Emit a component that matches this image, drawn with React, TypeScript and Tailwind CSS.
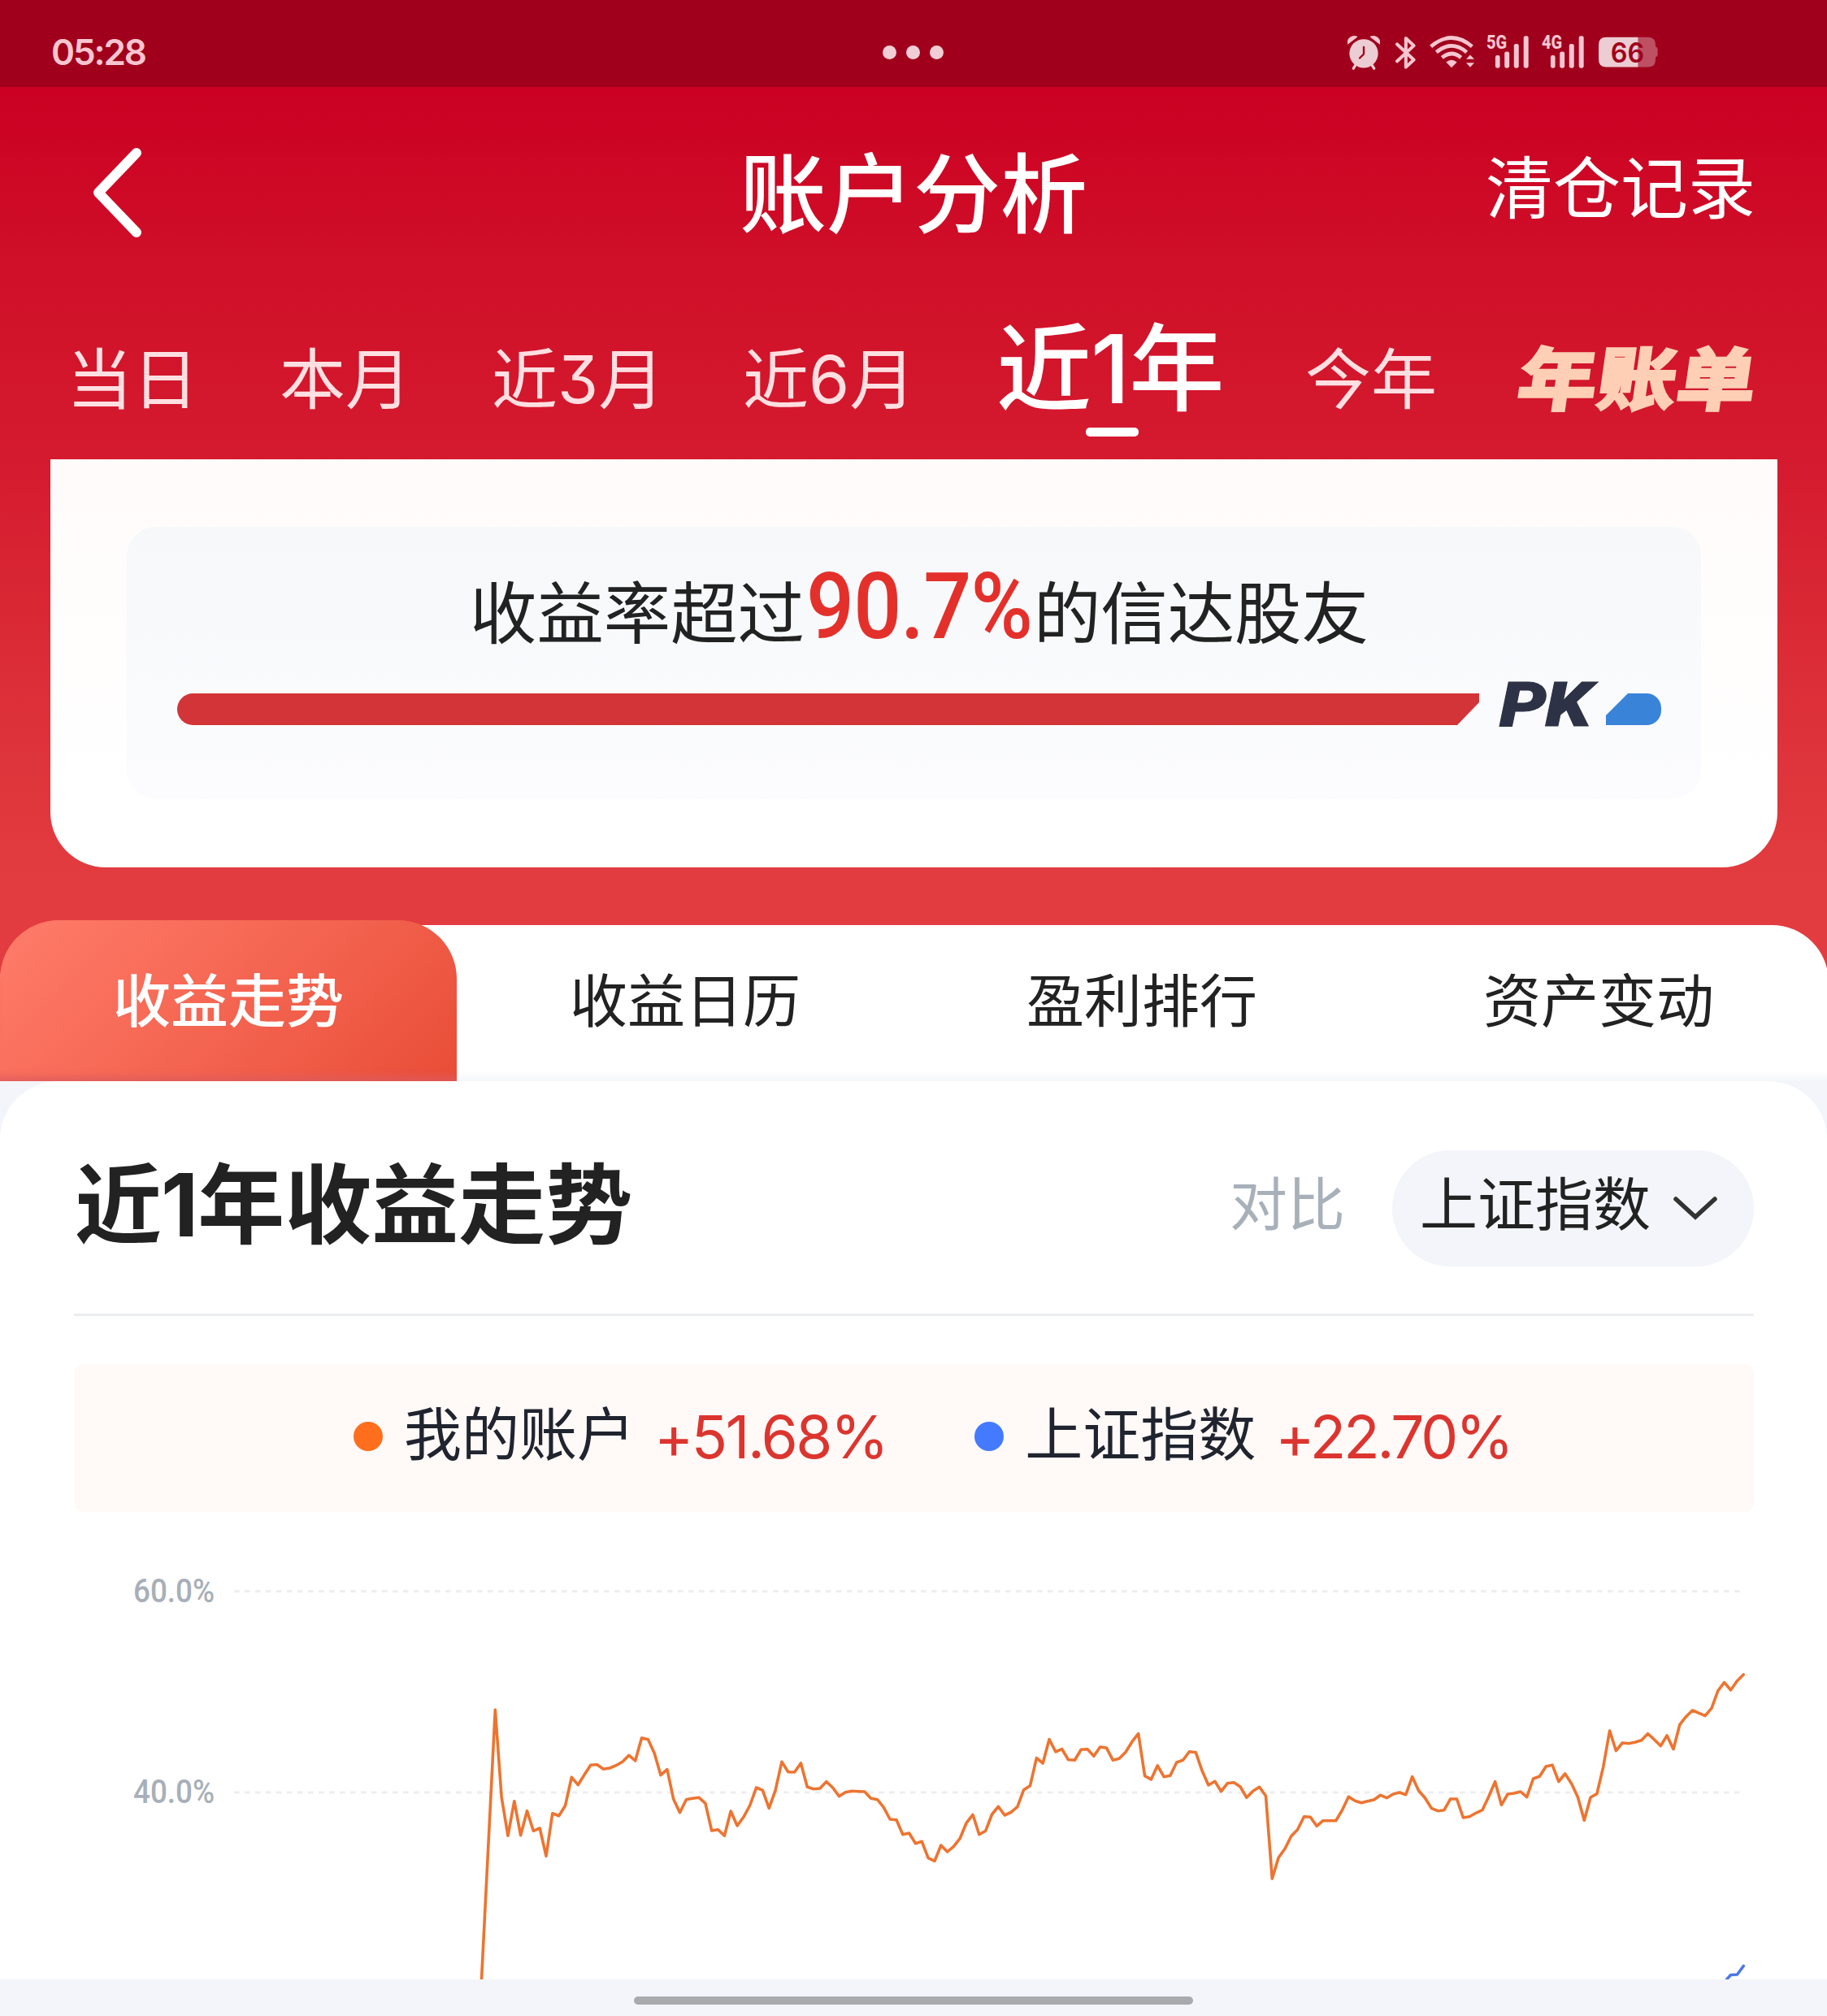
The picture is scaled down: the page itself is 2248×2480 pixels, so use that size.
import type { ReactNode } from 'react';

// Account line, one value per trading day, in thirds of a pixel below the chart's top edge.
const account = [
  190, 512, 655, 527, 653, 563, 637, 627, 730, 572, 581, 544, 439, 467, 430, 394, 392, 409, 405, 395,
  382, 358, 378, 294, 299, 350, 431, 410, 520, 569, 521, 517, 514, 535, 636, 632, 655, 564, 618, 586,
  543, 477, 487, 553, 487, 382, 419, 420, 387, 475, 482, 480, 455, 477, 509, 494, 490, 491, 492, 517,
  521, 550, 594, 596, 650, 645, 683, 676, 737, 748, 690, 714, 694, 664, 607, 577, 650, 637, 576, 547,
  579, 568, 548, 485, 470, 368, 387, 299, 345, 335, 374, 376, 337, 335, 361, 327, 331, 376, 370, 346,
  308, 278, 434, 447, 396, 437, 433, 384, 376, 344, 347, 415, 468, 454, 491, 461, 458, 474, 514, 490,
  475, 508, 813, 736, 703, 656, 632, 584, 586, 619, 599, 599, 599, 560, 511, 526, 533, 527, 522, 505,
  515, 501, 495, 503, 437, 488, 515, 553, 563, 560, 519, 519, 588, 584, 571, 560, 511, 455, 541, 501,
  498, 492, 512, 444, 436, 399, 394, 455, 426, 462, 512, 598, 513, 500, 400, 267, 341, 312, 314, 310,
  302, 278, 300, 323, 285, 335, 245, 215, 192, 202, 212, 184, 120, 89, 117, 84, 60,
];

const accountPoints = account.map((v, i) => `${(609.3 + i * 7.836).toFixed(1)},${(140 + v / 3).toFixed(1)}`).join(' ');

const sections = ['收益走势', '收益日历', '盈利排行', '资产变动'];

function Signal({ label }: { label: string }) {
  return (
    <svg viewBox="633 112 154 146" className="-mt-[6px] h-[49px] w-[51px] overflow-visible" fill="#f7c5d0">
      <text x="630" y="182" fontSize="71" fontWeight="800" fontFamily="Roboto, sans-serif" textLength="76" lengthAdjust="spacingAndGlyphs">
        {label}
      </text>
      <rect x="663" y="205" width="17" height="47" rx="7" />
      <rect x="697" y="191" width="18" height="61" rx="7" />
      <rect x="732" y="162" width="18" height="90" rx="7" />
      <rect x="768" y="133" width="18" height="119" rx="7" />
    </svg>
  );
}

function StatusBar() {
  return (
    <div className="relative flex h-[107px] shrink-0 justify-between bg-[#a0001b] pl-[63px]">
      <span className="mt-[42px] text-[44px] leading-none font-semibold tracking-[-2.1px] text-[#f7c5d0]">05:28</span>
      <div className="absolute top-[56px] left-[1086px] flex gap-[12px]">
        <i className="size-[17px] rounded-full bg-[#f1ced5]" />
        <i className="size-[17px] rounded-full bg-[#f1ced5]" />
        <i className="size-[17px] rounded-full bg-[#f1ced5]" />
      </div>
      <div className="mt-[43px] mr-[208px] flex items-start">
        <svg viewBox="118 130 120 128" className="h-[43px] w-[40px]">
          <circle cx="178" cy="198" r="53" fill="#eccdd3" />
          <path d="M148 240l-8 13M208 240l8 13" stroke="#eccdd3" strokeWidth="10" strokeLinecap="round" />
          <path d="M119 163c-4-20 14-34 35-27zM237 163c4-20-14-34-35-27z" fill="#f7c5d0" stroke="#f7c5d0" strokeWidth="3" strokeLinejoin="round" />
          <path d="M178 174v26l-15 15" fill="none" stroke="#a0001b" strokeWidth="7" strokeLinecap="round" strokeLinejoin="round" />
        </svg>
        <svg viewBox="293 130 74 128" className="ml-[19px] h-[43px] w-[25px]">
          <path d="M299 164l61 57-29 27V142l29 27-61 57" fill="none" stroke="#f7c5d0" strokeWidth="12" strokeLinecap="round" strokeLinejoin="round" />
        </svg>
        <svg viewBox="420 130 168 128" className="ml-[17px] h-[43px] w-[56px]">
          <g fill="none" stroke="#f7c5d0" strokeWidth="14">
            <path d="M425 172Q501 108 577 172" />
            <path d="M445 193Q501 146 557 193" />
            <path d="M466 213Q501 184 536 213" />
          </g>
          <path d="M481 230q20-16 40 0l-20 20z" fill="#f7c5d0" />
          <path d="M555 219l15-16 15 16zM555 232l15 17 15-17z" fill="#f7c5d0" />
        </svg>
        <div className="ml-[15px]">
          <Signal label="5G" />
        </div>
        <div className="ml-[17px]">
          <Signal label="4G" />
        </div>
        <svg viewBox="1043 130 218 128" className="ml-[18px] h-[43px] w-[73px]">
          <path d="M1188 138h36q28 0 28 28v6q8 2 8 10v20q0 8-8 10v8q0 28-28 28h-36z" fill="#be5064" />
          <path d="M1188 138h-117q-28 0-28 28v54q0 28 28 28h117z" fill="#eccdd3" />
          <text x="1087" y="231" fontSize="101" fontWeight="600" fill="#a0001b" fontFamily="Inter, sans-serif" textLength="124" lengthAdjust="spacingAndGlyphs">
            66
          </text>
        </svg>
      </div>
    </div>
  );
}

function Period({ className, children }: { className: string; children: ReactNode }) {
  return <span className={`shrink-0 text-[81px] leading-none text-[#ffdfe1] ${className}`}>{children}</span>;
}

function Beat() {
  return (
    <div className="mx-[62px] h-[502px] w-[2125px] shrink-0 rounded-b-[68px] bg-linear-to-b from-[#fffbfa] to-white to-80% pt-[83px] pl-[94px]">
      <div className="h-[335px] w-[1937px] rounded-[36px] bg-linear-to-b from-[#f6f8fa] to-[#fcfcff]">
        <div className="flex h-[205px] items-baseline pt-[42px] pl-[422px] text-[82.4px] leading-none text-[#222]">
          <span>收益率超过</span>
          <span className="w-[282px] pl-[2px] font-[Roboto] text-[113px] leading-none font-medium tracking-[-1px] text-[#e4302b]">
            <span className="inline-block origin-left scale-x-[0.92]">90.7%</span>
          </span>
          <span>的信达股友</span>
        </div>
        <div className="flex h-[39px] pl-[62px]">
          <div className="h-[39px] w-[1602px] rounded-l-[20px] bg-[#d33437] [clip-path:polygon(0_0,100%_0,100%_11px,calc(100%-27px)_100%,0_100%)]" />
          <div className="-mt-[24px] ml-[25px] w-[131px] origin-left scale-x-[1.2] font-[Roboto] text-[76px] leading-none font-black tracking-[-1px] text-[#2d3246] italic [-webkit-text-stroke:1px_#2d3246]">
            PK
          </div>
          <div className="h-[39px] w-[68px] rounded-r-[18px] bg-[#3983d8] [clip-path:polygon(27px_0,100%_0,100%_100%,0_100%,0_27px)]" />
        </div>
      </div>
    </div>
  );
}

function Legend({ dot, name, value, tracking }: { dot: string; name: string; value: string; tracking: string }) {
  return (
    <div className="flex items-center">
      <i className={`size-[36px] rounded-full ${dot}`} />
      <span className="mb-[6px] ml-[26px] text-[71px] leading-none text-[#20242f]">{name}</span>
      <span className={`ml-[24px] text-[73px] leading-none text-[#dc352f] ${tracking}`}>{value}</span>
    </div>
  );
}

function Chart() {
  return (
    <svg viewBox="0 0 2248 535" className="h-[535px] w-[2248px] shrink-0">
      <g fill="#a8afb8" fontFamily="Roboto, sans-serif" fontSize="40" fontWeight="500">
        <text x="164" y="71" textLength="100" lengthAdjust="spacingAndGlyphs">60.0%</text>
        <text x="164" y="318" textLength="100" lengthAdjust="spacingAndGlyphs">40.0%</text>
      </g>
      <g stroke="#eeeeee" strokeWidth="3" strokeDasharray="6.5 6.5">
        <path d="M288 57.5H2143" />
        <path d="M288 305H2143" />
      </g>
      <polyline points={`592.5,535 ${accountPoints}`} fill="none" stroke="#ed7430" strokeWidth="3.6" strokeLinejoin="round" strokeLinecap="round" />
      <polyline points="2122,538 2129.5,529.5 2137.5,529 2145.3,518.5" fill="none" stroke="#4c78e4" strokeWidth="3.6" strokeLinejoin="round" strokeLinecap="round" />
    </svg>
  );
}

export default function App() {
  return (
    <div className="flex h-[2480px] w-[2248px] flex-col overflow-hidden bg-[#f4f5fa] font-[Inter,'Noto_Sans_CJK_SC',sans-serif] [font-feature-settings:'cv09']">
      <StatusBar />

      <div className="flex h-[1223px] shrink-0 flex-col bg-linear-to-b from-[#cb0022] via-[#d51b2f] via-39% to-[#e23c40] to-80%">
        <header className="flex h-[260px] shrink-0 items-start">
          <svg viewBox="0 0 62 112" className="mt-[74px] ml-[113px] h-[112px] w-[62px]">
            <path d="M55 7L8 56l47 49" fill="none" stroke="#fff" strokeWidth="12" strokeLinecap="round" strokeLinejoin="round" />
          </svg>
          <h1 className="mt-[79px] ml-[735px] w-[430px] text-[107px] leading-none font-medium text-white">账户分析</h1>
          <span className="mt-[84px] ml-[488px] text-[83px] leading-none text-white">清仓记录</span>
        </header>

        <nav className="flex h-[198px] shrink-0 items-baseline pt-[28px] pl-[82px]">
          <Period className="w-[262px]">当日</Period>
          <Period className="w-[261px]">本月</Period>
          <Period className="w-[309px]">近3月</Period>
          <Period className="w-[312px]">近6月</Period>
          <span className="relative w-[380px] shrink-0 text-[117px] leading-none font-medium text-white">
            近<span className="-mx-px">1</span>年
            <i className="absolute top-[131px] left-[110px] h-[11px] w-[65px] rounded-[5px] bg-white" />
          </span>
          <Period className="w-[256px]">今年</Period>
          <span className="relative top-[2px] origin-bottom-left scale-x-[1.15] -skew-x-7 text-[85px] leading-none font-black text-[#ffcfb5] [-webkit-text-stroke:2px_#ffcfb5]">
            年账单
          </span>
        </nav>

        <Beat />

        <div className="relative mt-[65px] flex h-[198px] shrink-0 items-stretch">
          <div className="absolute top-[6px] -right-[2px] bottom-0 left-0 rounded-t-[70px] bg-white shadow-[inset_0_-14px_12px_-10px_#f1f3f9]" />
          {sections.map((name, i) => (
            <div
              key={name}
              className={
                i === 0
                  ? 'relative flex w-[562px] justify-center rounded-t-[72px] bg-linear-135 from-[#ff7c6a] to-[#e94d37] pt-[64px] text-[71px] leading-none font-medium text-white shadow-[inset_0_-14px_12px_-10px_#dd5a5e]'
                  : 'relative flex w-[562px] justify-center pt-[64px] text-[71px] leading-none text-[#222]'
              }
            >
              {name}
            </div>
          ))}
        </div>
      </div>

      <main className="flex h-[1105px] shrink-0 flex-col overflow-hidden rounded-t-[72px] bg-white">
        <div className="mr-[90px] ml-[91px] flex h-[289px] shrink-0 items-start border-b-[3px] border-[#ebedf1]">
          <h2 className="mt-[99px] w-[1422px] pl-px text-[107px] leading-none font-bold text-[#222]">
            近<span className="-mx-px">1</span>年收益走势
          </h2>
          <span className="mt-[116px] w-[200px] text-[71px] leading-none text-[#a8b0ba]">对比</span>
          <div className="mt-[85px] flex h-[143px] w-[445px] items-start rounded-full bg-[#f4f5fa] pt-[31px] pl-[34px]">
            <span className="text-[71px] leading-none text-[#222]">上证指数</span>
            <svg viewBox="0 0 56 32" className="mt-[25px] ml-[27px] h-[32px] w-[56px]">
              <path d="M4 4l24 22L52 4" fill="none" stroke="#333" strokeWidth="5.5" strokeLinecap="round" />
            </svg>
          </div>
        </div>

        <div className="mr-[90px] ml-[91px] mt-[59px] flex h-[182px] shrink-0 items-center gap-[108px] rounded-[12px] bg-[#fff9f7] pb-[4px] pl-[344px]">
          <Legend dot="bg-[#ff6e1c]" name="我的账户" value="+51.68%" tracking="tracking-[-2.5px]" />
          <Legend dot="bg-[#447aff]" name="上证指数" value="+22.70%" tracking="tracking-[-3.2px]" />
        </div>

        <div className="mt-[40px]">
          <Chart />
        </div>
      </main>

      <footer className="flex h-[45px] shrink-0 justify-center pt-[21px]">
        <div className="h-[10px] w-[688px] rounded-full bg-[#a9aaad]" />
      </footer>
    </div>
  );
}
